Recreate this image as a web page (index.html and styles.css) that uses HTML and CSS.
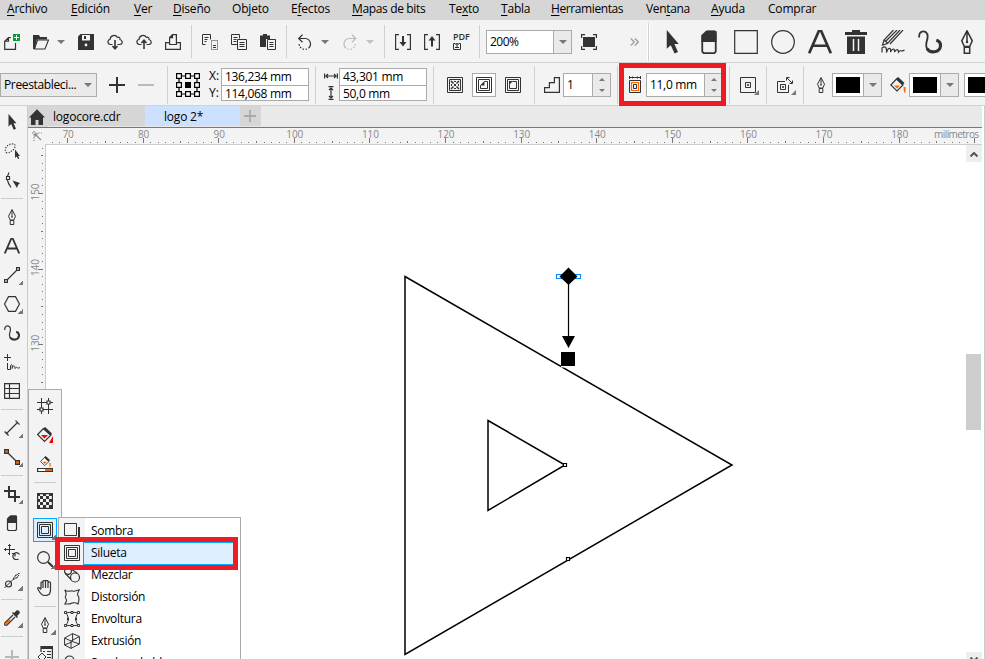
FILE: index.html
```html
<!DOCTYPE html>
<html lang="es">
<head>
<meta charset="utf-8">
<title>logo 2*</title>
<link rel="stylesheet" href="styles.css">
</head>
<body>
<svg class="defs">
  <symbol id="pointer" viewBox="0 0 16 16"><path class="f" d="M4.500 0v12.500l2.700-2.400 2.500 5.600 2.300-1-2.400-5.400H12.500z"/></symbol>
  <symbol id="eraser" viewBox="0 0 16 16"><path class="f" d="M3 8V3.500L6 .5h6.500L13 1v7z"/><path d="M3.500 7v7.500l1 1h7l1-1V2l-1-1H7L3.500 4z"/></symbol>
  <symbol id="letter-tool" viewBox="0 0 16 16"><path d="M.8 15.500 7.300.5h1.400l6.500 15M3 10.500h10" stroke-width="1.800"/></symbol>
  <symbol id="curve" viewBox="0 0 16 16"><path d="M.8 5C.3 1 3.500.2 5.300 1.500 9 4.500 3 9.500 6.500 13" stroke-width="1.200"/><path d="M6 12.300c2 3.500 8.700 3 9-1.800.1-2-1-3.200-2.800-3.700" stroke-width="2.100"/></symbol>
  <symbol id="pen" viewBox="0 0 16 16"><path d="M8 .5 4.500 7.200 6.200 11h3.600l1.700-3.800zM8 1v7M6.200 11.500v4h3.600v-4z" stroke-width="1"/><circle class="f" cx="8" cy="8" r=".8"/></symbol>
  <symbol id="contour" viewBox="0 0 16 16"><path stroke-width="1" d="M.5.5h15v15H.5zM2.500 2.500h11v11h-11zM4.500 4.500h7v7h-7z"/></symbol>
  <symbol id="bucket" viewBox="0 0 16 16"><path d="M6.500 2 .8 8l6.200 6 6-6z"/><path d="m7 1 6.500 6" stroke-width="3"/><path class="accent" d="M4 8.500h6l-3 3zM13.500 10h2v5.500h-1.500z"/></symbol>
  <symbol id="cloud" viewBox="0 0 16 16"><path d="M5.500 10.500H3.300C.2 10 .2 6 3 5.500 3.300 1 8.500.2 10.300 3.300c2-.5 3 .7 2.700 2.200 3 .8 3 4.700-.3 5h-2.200"/></symbol>
  <symbol id="page-lines" viewBox="0 0 16 16"><path stroke-width="1" d="M6.500 10.500h-6v-10h8v4M6.500 5.500h9v10h-9zM2.500 3.500h4M2.500 5.500h3M2.500 7.500h3M8.500 8.500h5M8.500 10.500h5M8.500 12.500h5"/></symbol>
  <symbol id="caret" viewBox="0 0 8 4"><path class="cf" d="M0 0h8L4 4z"/></symbol>
</svg>
<div class="app">
  <nav class="menubar">
    <span class="w63"><u>A</u>rchivo</span><span class="w63"><u>E</u>dición</span><span class="w39"><u>V</u>er</span><span class="w59"><u>D</u>iseño</span><span class="w59">Ob<u>j</u>eto</span><span class="w61">E<u>f</u>ectos</span><span class="w97"><u>M</u>apas de bits</span><span class="w52">Te<u>x</u>to</span><span class="w50"><u>T</u>abla</span><span class="w95"><u>H</u>erramientas</span><span class="w65">Ven<u>t</u>ana</span><span class="w57"><u>A</u>yuda</span><span>Comprar</span>
  </nav>

  <div class="bar standard">
    <svg class="ic" viewBox="0 0 16 16"><path d="M7 3.500H4.500L.7 7.200v8.200h10.800V9M4.500 3.500v3.700H.7"/><path fill="#0a9a3c" stroke="none" d="M9 0h7v7H9z"/><path stroke="#fff" stroke-width="1" d="M12.500 1v5M10 3.500h5"/></svg>
    <svg class="ic tight" viewBox="0 0 16 16"><path class="f" d="M0 1h6l1 2h7v2.500H4L1.500 15H0z"/><path d="M4.500 6h11L12 15H1.500z" stroke-width="1.100"/></svg>
    <svg class="caret"><use href="#caret"/></svg>
    <svg class="ic" viewBox="0 0 16 16"><path class="f" d="M2.500 0H16v16H0V2.500z"/><path fill="#f3f3f3" stroke="none" d="M4 1h8v5.500H4z"/><path class="f" d="M6 2h2v3H6z"/><circle cx="8" cy="11" r="1.400" fill="#f3f3f3" stroke="none"/></svg>
    <svg class="ic" viewBox="0 0 16 16"><use href="#cloud"/><path d="M8 6v9M5.500 12 8 14.700l2.500-2.700" stroke-width="1.600"/></svg>
    <svg class="ic" viewBox="0 0 16 16"><use href="#cloud"/><path d="M8 15V6M5.500 9 8 6.300 10.500 9" stroke-width="1.600"/></svg>
    <svg class="ic" viewBox="0 0 16 16"><path d="M4.600 10.500V3.500l2.900-2.900h3.900v9.900zM4 8.600H.6v6.800h14.800V8.600H12M7.500.6v3h-3"/></svg>
    <i class="sep"></i>
    <svg class="ic" viewBox="0 0 16 16"><path stroke-width="1" d="M3.500 10.500h-3v-10h8v5M2.500 3.500h4M2.500 5.500h3M2.500 7.500h2"/><path stroke-width="1" d="M9.500 6.500h6v9h-6z" stroke-dasharray="1 1"/><path stroke-width="1" d="M11 11.500h3M11 13.500h3"/></svg>
    <svg class="ic"><use href="#page-lines"/></svg>
    <svg class="ic" viewBox="0 0 16 16"><path class="f" d="M0 1.500h3V0h4v1.500h3V5H6v8H0z"/><path stroke-width="1" d="M7.500 5.500h8v10h-8zM9.500 8.500h4M9.500 10.500h4M9.500 12.500h4"/></svg>
    <i class="sep"></i>
    <svg class="ic tight" viewBox="0 0 16 16"><path d="M2 4.500h6.500a5.500 5.500 0 0 1 3 9.700M5.500.8 1.700 4.500l3.800 3.700"/><path d="M10 15a6 6 0 0 1-8-6" stroke-dasharray="1.500 1.500"/></svg>
    <svg class="caret"><use href="#caret"/></svg>
    <svg class="ic tight dim" viewBox="0 0 16 16"><path d="M13.500 4.500H7a5.500 5.500 0 0 0-3 9.700M10 .8l3.800 3.700L10 8.200"/><path d="M5.500 15a6 6 0 0 0 8-6" stroke-dasharray="1.500 1.500"/></svg>
    <svg class="caret dim"><use href="#caret"/></svg>
    <i class="sep"></i>
    <svg class="ic" viewBox="0 0 16 16"><path d="M4 .6H.6v14.800H4M12 .6h3.400v14.800H12"/><path d="M8 2v8" stroke-width="2"/><path class="f" d="M4.500 8h7L8 12.500z"/></svg>
    <svg class="ic" viewBox="0 0 16 16"><path d="M4 .6H.6v14.800H4M12 .6h3.400v14.800H12"/><path d="M8 4v8.500" stroke-width="2"/><path class="f" d="M4.500 6.500h7L8 2z"/></svg>
    <span class="pdf"><b>PDF</b><svg viewBox="0 0 8 8"><path stroke-width="1" d="M2.500 1.500h-2v6h7v-6h-2M4 6V1M2.500 3 4 1.300 5.500 3M2 5.500h4"/></svg></span>
    <i class="sep"></i>
    <div class="combo zoom"><span>200%</span><em><svg class="caret"><use href="#caret"/></svg></em></div>
    <svg class="ic full" viewBox="0 0 16 16"><path class="f" d="M2 3h12v10H2z"/><path d="M.6 4V.6H4M12 .6h3.400V4M15.400 12v3.400H12M4 15.400H.6V12"/></svg>
    <svg class="more" viewBox="0 0 9 8"><path d="m.8.5 3.500 3.500-3.500 3.500M4.800.5l3.500 3.500-3.500 3.500"/></svg>
    <i class="grip"></i>
    <div class="big">
      <svg><use href="#pointer"/></svg>
      <svg><use href="#eraser"/></svg>
      <svg viewBox="0 0 24 24"><path d="M.7.7h22.600v22.600H.7z"/></svg>
      <svg viewBox="0 0 24 24"><circle cx="12" cy="12" r="11.300"/></svg>
      <svg><use href="#letter-tool"/></svg>
      <svg viewBox="0 0 24 24"><path class="f" d="M1 2h7V0h8v2h7v3H1zM3 6.500h18V24H3z"/><path stroke="#f3f3f3" stroke-width="1.500" d="M9.500 9v12M14.500 9v12"/></svg>
      <svg viewBox="0 0 24 24"><path d="M12.500 0 3 10 1.500 15l5-1.500L19 0M16 0 4.500 11.500M22 0 9 14M3 10l4 3.500"/><path d="M1 22.500V18c3-2.500 5-1 4.500 4.500C7 17 10.500 17 9.500 22c2-4 4.500-4 4 0 2-3.500 4-3 4 0 2.500-3 3 .5 6-2"/></svg>
      <svg><use href="#curve"/></svg>
      <svg><use href="#pen"/></svg>
    </div>
  </div>

  <div class="bar props">
    <div class="combo preset"><span>Preestableci...</span><em><svg class="caret"><use href="#caret"/></svg></em></div>
    <svg class="ic plus" viewBox="0 0 16 16"><path stroke-width="2" d="M8 0v16M0 8h16"/></svg>
    <svg class="ic minus" viewBox="0 0 16 16"><path stroke-width="2" d="M0 8h16"/></svg>
    <i class="sep"></i>
    <svg class="anchor" viewBox="0 0 24 24"><path stroke-width="1.200" d="M3 3h18v18H3z"/><path fill="#fff" d="M.6.6h4.800v4.800H.6zM9.600.6h4.800v4.800H9.600zM18.600.6h4.800v4.800h-4.800zM.6 9.600h4.800v4.800H.6zM18.600 9.600h4.800v4.800h-4.800zM.6 18.600h4.800v4.800H.6zM9.600 18.600h4.800v4.800H9.600zM18.600 18.600h4.800v4.800h-4.800z"/><path fill="#000" stroke="none" d="M9 9h6v6H9z"/></svg>
    <div class="pair xy"><span>X:</span><span>Y:</span></div>
    <div class="fields"><span>136,234 mm</span><span>114,068 mm</span></div>
    <i class="sep s6"></i>
    <div class="pair size">
      <svg viewBox="0 0 14 14"><path d="M.6 4.500v5M13.400 4.500v5M2 7h10M4 5 2 7l2 2M10 5l2 2-2 2"/></svg>
      <svg viewBox="0 0 14 14"><path d="M4.500.6h5M4.500 13.400h5M7 2v10M5 4l2-2 2 2M5 10l2 2 2-2"/></svg>
    </div>
    <div class="fields"><span>43,301 mm</span><span>50,0 mm</span></div>
    <i class="sep s6"></i>
    <svg class="ic mode" viewBox="0 0 16 16"><path stroke-width="1" d="M.5.5h15v15H.5zM2.500 2.500h11v11h-11z"/><path d="m4 4 2.500 2.500M12 4 9.500 6.500M4 12l2.500-2.500M12 12 9.500 9.500" stroke-width="1.500"/><path class="f" d="M7 4h2v1H7zM7 11h2v1H7zM4 7h1v2H4zM11 7h1v2h-1zM7 7h2v2H7z"/></svg>
    <span class="pressed"><svg class="ic" viewBox="0 0 16 16"><path stroke-width="1" d="M.5.5h15v15H.5zM2.500 2.500h11v11h-11z"/><path stroke-width="1" d="M8.500 4.500h3v7h-7v-3"/><path class="f" d="M4 8.500 8.500 4v4.500z"/></svg></span>
    <svg class="ic out" viewBox="0 0 16 16"><path stroke-width="1" d="M.5.5h15v15H.5zM2.500 2.500h11v11h-11z"/><path stroke-width="1" d="M7.500 4.500h4v7h-7v-4"/><path class="f" d="M4 4h4L4 8z"/></svg>
    <i class="sep s14"></i>
    <svg class="ic steps" viewBox="0 0 16 16"><path d="M.6 15.400v-4.800h4.800V5.600h5V.6h5v14.800z"/></svg>
    <div class="spin count"><span>1</span><em><svg class="caret up"><use href="#caret"/></svg><svg class="caret"><use href="#caret"/></svg></em></div>
    <i class="sep s7"></i>
    <svg class="offset-icon" viewBox="0 0 12 17"><path stroke-width="1" d="M.5 0v3M11.500 0v3M0 1.500h12M3.500.500v2M8.500.500v2M.5 4.500h11v12H.5zM4.500 8.500h3v4h-3z"/><path stroke="#f60" stroke-width="1.200" d="M2.500 6.500h7v8h-7z"/></svg>
    <div class="spin offset"><span>11,0 mm</span><em><svg class="caret up"><use href="#caret"/></svg><svg class="caret"><use href="#caret"/></svg></em></div>
    <i class="sep s7"></i>
    <svg class="corner" viewBox="0 0 20 20"><path stroke-width="1" d="M.5 2.500h15v15H.5zM5.500 7.500h5v5h-5zM7.500 9.500h1v1h-1z"/><path class="cf" d="M19 15v5h-5z"/></svg>
    <i class="sep s6"></i>
    <svg class="corner" viewBox="0 0 20 20"><path stroke-width="1" d="M8 6.500H.5v11h11V10M3.500 9.500h5v5h-5zM5.500 11.500h1v1h-1zM10 3l5 5M9.500 5.500v-3h3M15.500 5.500v3h-3"/><path class="cf" d="M19 15v5h-5z"/></svg>
    <i class="sep s5"></i>
    <svg class="ic nib"><use href="#pen"/></svg>
    <div class="swatch"><span><b></b></span><em><svg class="caret"><use href="#caret"/></svg></em></div>
    <svg class="ic fill"><use href="#bucket"/></svg>
    <div class="swatch"><span><b></b></span><em><svg class="caret"><use href="#caret"/></svg></em></div>
    <div class="swatch last"><span><b></b></span></div>
  </div>

  <div class="body">
    <aside class="tools">
      <svg><use href="#pointer"/></svg>
      <svg viewBox="0 0 16 16"><path stroke-dasharray="1.200 1.400" d="M3 10C-1 7 3 1 8 1c5-.5 3 4 1 6-2 1-3 3-6 3z"/><path class="f" d="M11 6.500v8.500l1.700-1.500 1.300 2.500 1.200-.6-1-2.500H16z"/></svg>
      <svg viewBox="0 0 16 16"><path d="M5 .5c-3 5-1 11 2 15"/><path fill="#fff" d="M2.500 4.500h3v3h-3z"/><path class="f" d="m8.500 8.500 7.500 2.500-2 2-1 3z"/></svg>
      <i></i>
      <svg><use href="#pen"/></svg>
      <svg><use href="#letter-tool"/></svg>
      <svg class="more-tools" viewBox="0 0 16 16"><path d="M.6 12.600h2.800v2.800H.6zM12.600.6h2.800v2.800h-2.800zM3.500 12.500l9-9"/></svg>
      <svg class="more-tools" viewBox="0 0 16 16"><path d="M4.500.6h7l4 7.400-4 7.400h-7L.5 8z"/></svg>
      <svg><use href="#curve"/></svg>
      <svg viewBox="0 0 16 16"><path stroke-width="1" d="M3.500 0v7M0 3.500h7M3.500 9v6.500h3v-4c2-2 2 0 1.500 3 1.500-4 3-3 3 0 2-3 2 1 5-1"/></svg>
      <svg viewBox="0 0 16 16"><path stroke-width="1.200" d="M.6.6h14.800v14.800H.6zM5.500.6v14.800M.6 5.500h14.800M.6 10.500h14.800"/></svg>
      <i></i>
      <svg class="more-tools" viewBox="0 0 16 16"><path d="m2 14 12-12M.6 11.500l4 4M11.500.6l4 4"/></svg>
      <svg class="more-tools" viewBox="0 0 16 16"><path d="m3 3 10 10"/><path fill="#f60" d="M.6.6h3.800v3.800H.6zM11.600 11.600h3.800v3.800h-3.800z"/></svg>
      <i></i>
      <svg class="more-tools" viewBox="0 0 16 16"><path stroke-width="2" d="M0 5h11v6M5 0v11h11M11 11v5"/></svg>
      <svg><use href="#eraser"/></svg>
      <svg viewBox="0 0 16 16"><path stroke-width="1" d="M5.500 0v11M0 5.500h11M4 2 5.500.5 7 2M2 4 .5 5.500 2 7M4 9l1.500 1.500"/><path d="M15.500 10.500a3.500 3.500 0 1 0-1 4.500M8 9.500h3v3"/></svg>
      <svg class="more-tools" viewBox="0 0 16 16"><circle cx="4.500" cy="11" r="3"/><path stroke-width="1" d="m.5 15 9-9c0-3 2-1 2-4 3 1 1-2 4-1.500M9 6c3 1 1-2 4-1 0-2 1-1 2-3"/></svg>
      <i></i>
      <svg class="more-tools" viewBox="0 0 16 16"><path d="M9 5 .8 13v2.200H3L11 7"/><path class="f" d="m8 3 5 5 1-1-1-1 2.500-2.500c1-2-1-4-3-3L10 3 9 2z"/><path stroke="#f60" stroke-width="2" d="m2 14 4-4"/></svg>
      <i></i>
      <svg class="faded" viewBox="0 0 16 16"><path stroke-width="2" d="M8 1v14M1 8h14"/></svg>
    </aside>

    <main class="workspace">
      <header class="tabs">
        <svg class="home" viewBox="0 0 16 16"><path class="f" d="M8 .3 0 8.500h2V16h4.500v-5h3v5H14V8.500h2z"/></svg>
        <span class="tab">logocore.cdr</span>
        <span class="tab active">logo 2*</span>
        <span class="tab add"><svg viewBox="0 0 12 12"><path stroke-width="1.800" d="M6 0v12M0 6h12"/></svg></span>
      </header>
      <div class="stage">
        <div class="origin"><svg viewBox="0 0 10 10"><path d="M3 3l6 6M3 6V3h3"/><path stroke-dasharray="1.500 1.500" d="M0 2h10M2 0v10"/></svg></div>
        <svg class="hruler" id="hruler" viewBox="45 128 937 16"></svg>
        <svg class="vruler" id="vruler" viewBox="28 145 17 514"></svg>
        <div class="canvas">
          <svg class="drawing" viewBox="46 145 919 514">
            <path d="M405 276.500 732 465 405 654.500zM488 420.500 565 465l-77 45.500z" fill="none" stroke="#000" stroke-width="1.500"/>
            <path d="M561 366h10v1.500h-10z" fill="#fff"/>
            <path d="M556.500 274.500h24v4h-24z" fill="#fff" stroke="#0a84ff"/>
            <path d="m568.500 267.500 9 9-9 8.500-9-8.500zM562 336h13l-6.500 12zM561 352h14v14h-14z"/>
            <path d="M568.500 276v62" stroke="#000"/>
            <path d="M563.500 463.500h3v3h-3zM566.500 557.500h3v3h-3z" fill="#fff" stroke="#000"/>
          </svg>
          <div class="scroll">
            <span class="arrow"><svg viewBox="0 0 8 5"><path d="m.5 4.500 3.500-3.500 3.500 3.500" stroke-width="2"/></svg></span>
            <span class="thumb"></span>
            <span class="arrow down"><svg viewBox="0 0 8 5"><path d="m.5.500 3.500 3.500 3.500-3.500" stroke-width="2"/></svg></span>
          </div>
        </div>
      </div>
    </main>
    <div class="edge"></div>
  </div>

  <aside class="flyout">
    <svg viewBox="0 0 16 16"><path stroke-width="1" d="M4.500 0v16M11.500 0v16M0 4.500h16M0 11.500h16"/><path fill="#fff" d="M10 3h3v3h-3zM3 10h3v3H3z"/></svg>
    <svg viewBox="0 0 16 16"><path d="M6.500 1.500.6 7.500l6.900 7 6.500-6.500z"/><path d="m7 1 7 6.500" stroke-width="3"/><path class="red" d="M4 8h7l-3.500 3.500zM16 9v7h-4z"/></svg>
    <svg viewBox="0 0 16 16"><svg width="11" height="11" x="3" y="0" viewBox="0 0 16 16"><use href="#bucket"/></svg><path fill="#fff" d="M.6 12.500h14.800v3H.6z"/><path class="accent" d="M8 13h7v2H8z"/></svg>
    <i></i>
    <svg viewBox="0 0 16 16"><path d="M.6.6h14.800v14.800H.6z"/><path class="f" d="M0 0h3v3h3V0h3v3h3V0h3v3h-3v3h3v3h-3v3h3v3h-3v-3H9v3H6v-3H3v3H0v-3h3V9H0V6h3V3H0zm3 6v3h3V6zm3 0h3V3H6zm3 0v3h3V6zM6 9v3h3V9z"/></svg>
    <span class="chosen"><svg class="more-tools"><use href="#contour" width="16" height="16"/></svg></span>
    <svg class="more-tools" viewBox="0 0 16 16"><circle cx="6.500" cy="6.500" r="5.900"/><path stroke-width="2" d="m11 11 5 5"/></svg>
    <svg viewBox="0 0 16 16"><path d="M4 9V3c0-1.500 2-1.500 2 0v5V1.500c0-1.500 2.500-1.500 2.500 0V8 1.500c0-1.500 2.500-1.500 2.500 0V8 3c0-1.500 2.500-1.500 2.500 0v7c0 3-1.500 5.500-5 5.500S3.500 14 .8 9c-.5-2 1.500-2 3.200.5"/></svg>
    <i class="wide"></i>
    <svg class="more-tools"><use href="#pen"/></svg>
    <svg viewBox="0 0 16 16"><path d="M4 6V.6h11.400v14.800H10"/><path class="f" d="M4 0h12v3H4z"/><path stroke-width="1" d="M6 5.500h2M10 5.500h4M10 8.500h4M10 11.500h4M5 7l-4 4 4 4 4-4z"/></svg>
  </aside>

  <section class="submenu">
    <div><svg viewBox="0 0 16 16"><path stroke-width="1" d="M.5.5h12v12H.5z"/><path stroke-width="2" d="M15 4v11H4"/></svg><span>Sombra</span></div>
    <div class="hot"><svg><use href="#contour"/></svg><span>Silueta</span></div>
    <div><svg viewBox="0 0 16 16"><circle cx="4" cy="4" r="3.400"/><circle cx="11" cy="10.500" r="4.500"/><path d="m6.500 1.500 7 5M1.500 6.500l5.500 6"/></svg><span>Mezclar</span></div>
    <div><svg viewBox="0 0 16 16"><path stroke-width="1.100" d="M.8.8C3 3 5 2 7 2c1-1 2 1 4 0l4.200-1.200c-1 3-2.500 4-1.200 6 1.500 1 .5 2 1 4l-1 4.200c-3-2-4-1-6-1-2 1.500-4 1-7.200 1C3 12 3 11 1.500 9c-.8-2 1.500-3 .5-5z"/></svg><span>Distorsión</span></div>
    <div><svg viewBox="0 0 16 16"><path stroke-width="1" d="M2 2c4-1 8-1 12 0-3 4-3 8 0 12-4 1-8 1-12 0 3-4 3-8 0-12z"/><path stroke-width="1" fill="#fff" d="M.5.5h2v2h-2zM13.500.5h2v2h-2zM.5 13.500h2v2h-2zM13.500 13.500h2v2h-2zM7 .5h2v2H7zM7 13.500h2v2H7zM3.500 7h1v2h-1zM11.500 7h1v2h-1z"/></svg><span>Envoltura</span></div>
    <div><svg viewBox="0 0 16 16"><path stroke-width="1" d="m.6 5 8-4.400 6.800 2.900v7.500L7 15.400.6 12zM.6 5 7 8l8.400-4.500M7 8v7.400M8.600.6v8M.6 12l8-3.400 6.800 2.400"/></svg><span>Extrusión</span></div>
    <div><svg viewBox="0 0 16 16"><circle cx="5.500" cy="5.500" r="4.500"/><path d="m8 8 7 7V8z"/></svg><span>Sombra de bloque</span></div>
  </section>
  <i class="mark mark-offset"></i>
  <i class="mark mark-menu"></i>
</div>
<script src="script.js"></script>
</body>
</html>
```
FILE: styles.css
```css
* { box-sizing: border-box; }
body { margin: 0; overflow: hidden; font: 12px/16px "Open Sans", "Noto Sans", sans-serif; color: #000; }
i, em { font-style: normal; }
svg { display: block; flex: none; fill: none; stroke: #333; stroke-width: 1.2; }
.defs { position: absolute; width: 0; height: 0; }
.f { fill: #333; stroke: none; }
.cf { fill: #777; stroke: none; }
.accent { fill: #f60; stroke: none; }
.red { fill: #f00; stroke: none; }
.app { position: relative; width: 985px; height: 659px; overflow: hidden; display: flex; flex-direction: column; background: #f3f3f3; }

.menubar { flex: none; height: 20px; padding: 1px 0 0 7px; display: flex; background: #d6d6d6; white-space: nowrap; letter-spacing: -.2px; }
.menubar span { flex: none; }
u { text-underline-offset: 2px; text-decoration-thickness: 1px; }
.w39 { width: 39px; } .w50 { width: 50px; } .w52 { width: 52px; } .w57 { width: 57px; } .w59 { width: 59px; }
.w61 { width: 61px; } .w63 { width: 63px; } .w65 { width: 65px; letter-spacing: -.35px; } .w95 { width: 95px; letter-spacing: -.4px; } .w97 { width: 97px; letter-spacing: -.35px; }
.menubar .w63:first-child { width: 64px; }

.bar { flex: none; height: 43px; display: flex; align-items: center; border-bottom: 1px solid #d2d2d2; overflow: hidden; }
.bar > * { flex: none; }
.ic { width: 16px; height: 16px; margin-right: 13px; }
.ic.tight { margin-right: 8px; }
.caret { width: 8px; height: 4px; }
.standard { padding: 1px 0 0 4px; }
.standard > .caret { margin-right: 13px; }
.dim { stroke: #bbb; }
.caret.dim { opacity: .4; stroke: none; }
.sep { width: 1px; height: 33px; background: #d0d0d0; margin: 0 10px 0 -3px; }
.pdf { width: 16px; height: 17px; margin-right: 13px; display: flex; flex-direction: column; }
.pdf b { font: 600 9px/8px "Open Sans", sans-serif; color: #333; letter-spacing: -.1px; }
.pdf svg { width: 8px; height: 8px; margin-top: 1px; }
.combo { display: flex; height: 24px; border: 1px solid #ababab; background: #fff; }
.combo span { flex: 1; padding: 3px 0 0 3px; white-space: nowrap; letter-spacing: -.5px; }
.combo em { width: 18px; display: flex; align-items: center; justify-content: center; background: #eaeaea; border-left: 1px solid #ababab; }
.zoom { width: 86px; margin: 0 9px 0 -4px; }
.ic.full { margin-right: 33px; }
.more { width: 9px; height: 8px; margin-right: 8px; stroke: #999; }
.grip { width: 3px; height: 38px; background: #d0d0d0; border: solid #fff; border-width: 0 1px; margin-right: 4px; }
.big { display: flex; }
.big svg { width: 24px; height: 24px; margin: 0 6.400px; }

.props { padding-top: 1px; }
.preset { width: 97px; background: #eaeaea; }
.preset em { border: 0; width: 16px; }
.preset span { letter-spacing: -.35px; }
.ic.plus { margin-left: 12px; }
.ic.minus { stroke: #bbb; margin-right: 16px; }
.props .sep { margin: 0 8px 0 -3px; height: 38px; }
.anchor { width: 24px; height: 24px; stroke: #000; margin-right: 9px; }
.pair { height: 33px; display: grid; grid-template-rows: 1fr 1fr; align-items: center; }
.xy { width: 12px; }
.size { width: 15px; }
.size svg { width: 14px; height: 14px; }
.fields { width: 88px; height: 33px; display: grid; grid-template-rows: 1fr 1fr; background: #fff; border: 1px solid #ababab; }
.fields span { padding-left: 3px; line-height: 16px; letter-spacing: -.3px; }
.fields span + span { border-top: 1px solid #ababab; line-height: 15px; }
.props .s6 { margin: 0 8px 0 6px; }
.ic.mode { margin: 0 9px 0 5px; }
.pressed { width: 24px; height: 24px; border: 1px solid #ababab; background: #fff; padding: 3px; margin-right: 9px; }
.pressed .ic { margin: 0; }
.ic.out { margin: 0; }
.props .s14 { margin: 0 9px 0 13px; }
.ic.steps { margin-right: 3px; }
.spin { height: 24px; display: flex; background: #fff; border: 1px solid #ababab; }
.spin span { flex: 1; padding: 3px 0 0 3px; white-space: nowrap; letter-spacing: -.3px; }
.spin em { width: 18px; background: #eaeaea; border-left: 1px solid #ababab; display: flex; flex-direction: column; align-items: center; justify-content: space-around; }
.spin .caret { width: 6px; height: 3px; }
.up { transform: rotate(180deg); }
.count { width: 48px; }
.props .s7 { margin: 0 11px 0 6px; }
.offset-icon { width: 12px; height: 17px; margin-right: 5px; }
.offset { width: 77px; }
.props .offset + .sep { margin: 0 10px 0 6px; }
.corner { width: 20px; height: 20px; }
.props .corner + .s6 { margin: 0 10px 0 6px; }
.props .s5 { margin: 0 9px 0 6px; }
.ic.nib { margin-right: 3px; }
.swatch { width: 50px; height: 24px; display: flex; border: 1px solid #ababab; background: #fff; }
.swatch span { flex: 1; padding: 3px; }
.swatch b { display: block; height: 16px; background: #000; }
.swatch em { width: 18px; display: flex; align-items: center; justify-content: center; background: #eaeaea; border-left: 1px solid #ababab; }
.ic.fill { margin: 0 3px 0 8px; }
.swatch.last { margin-left: 5px; }

.body { flex: 1; display: flex; min-height: 0; }
.tools { width: 28px; flex: none; border-right: 1px solid #ccc; padding-top: 2px; display: flex; flex-direction: column; overflow: hidden; }
.tools > svg { width: 16px; height: 16px; margin: 6px 0 7px 4px; }
.tools > i, .flyout > i { flex: none; height: 8px; margin: 0 4px 0 1px; background: linear-gradient(#ccc, #ccc) 0 3px / 100% 1px no-repeat; }
.tools > svg.faded { opacity: .3; margin-top: 8px; }
.tools > .more-tools, .flyout .more-tools { width: 23px; height: 23px; padding: 0 7px 7px 0; background: linear-gradient(135deg, transparent 50%, #777 50%) 14px 13px / 5px 5px no-repeat; }
.tools > .more-tools { margin: 6px 0 0 4px; }
.workspace { flex: 1; display: flex; flex-direction: column; min-width: 0; margin-left: -1px; }
.tabs { flex: none; height: 22px; display: flex; background: #e9e9e9; border-bottom: 1px solid #009fee; margin-left: 1px; }
.home { width: 20px; height: 21px; padding: 3px 3px 2px 1px; background: #d6d6d6; }
.tab { height: 20px; width: 97px; padding: 3px 0 0 5px; background: #d6d6d6; letter-spacing: -.2px; line-height: 15px; }
.tab.active { width: 95px; padding-left: 19px; background: #cce1ff; }
.tab.add { width: 21px; padding: 4px; }
.add svg { width: 12px; height: 12px; stroke: #aaa; }
.stage { flex: 1; display: grid; grid-template: 17px 1fr / 18px 1fr; min-height: 0; }
.origin { padding: 3px 0 0 5px; }
.origin svg { width: 10px; height: 10px; stroke: #888; }
.hruler { width: 937px; height: 16px; }
.hruler, .vruler { stroke: #777; stroke-width: 1; overflow: visible; }
.hruler text, .vruler text { font: 10px "Open Sans", sans-serif; fill: #888; stroke: none; letter-spacing: -.1px; }
.vruler { width: 17px; height: 514px; }
.canvas { background: #fff; border: solid #ccc; border-width: 1px 0 0 1px; display: flex; min-height: 0; margin-top: -1px; }
.drawing { width: 919px; height: 514px; fill: #000; stroke: none; }
.scroll { width: 17px; display: flex; flex-direction: column; }
.scroll .arrow { height: 17px; background: #eee; padding: 7px 0 0 4px; margin: 0 0 0 1px; }
.arrow svg { width: 8px; height: 5px; stroke: #555; }
.thumb { height: 76px; margin: 192px 1px 0; background: #cdcdcd; }
.scroll .arrow.down { margin-top: auto; height: 7px; padding-top: 5px; overflow: hidden; flex: none; }
.edge { width: 3px; flex: none; background: #fff; border-right: 1px solid #ccc; }

.flyout { position: absolute; left: 28px; top: 389px; width: 34px; height: 290px; padding-top: 2px; background: #f3f3f3; border: 1px solid #aaa; display: flex; flex-direction: column; }
.flyout > svg { width: 16px; height: 16px; margin: 6px 8px 7px; }
.flyout > .more-tools { margin: 6px 0 0 8px; }
.flyout > i, .flyout > i.wide { height: 8px; margin: 0 5px; }
.chosen { width: 24px; height: 24px; flex: none; margin: 2px 4px 3px; padding: 3px; border: 1px solid #0af; background: #dfeeff; }
.submenu { position: absolute; left: 58px; top: 517px; width: 183px; height: 170px; border: 1px solid #aaa; padding-top: 2px; background: linear-gradient(90deg, #f3f3f3 26px, #fff 26px); }
.submenu div { height: 22px; display: flex; align-items: center; }
.submenu svg { width: 16px; height: 16px; margin: 0 5px; }
.submenu span { flex: 1; padding: 2px 0 2px 6px; letter-spacing: -.3px; white-space: nowrap; }
.submenu .hot span { margin: 0 4px 0 -2px; padding: 2px 0 3px 7px; border: 1px solid #0af; background: #dfeeff; }
.mark { position: absolute; border: 5px solid #ee1b24; pointer-events: none; }
.mark-offset { left: 619px; top: 63px; width: 107px; height: 43px; }
.mark-menu { left: 55px; top: 537px; width: 183px; height: 33px; }
```
FILE: script.js
```js
const STEP = 7.56;

// Horizontal ruler: 70 mm sits at x = 67.5
let h = "";
for (let i = -2; i <= 121; i++) {
  const x = 67.5 + i * STEP;
  if (x > 979) break;
  const px = Math.floor(x) + 0.5;
  const major = i % 10 === 0;
  const top = major ? 138 : i % 5 === 0 ? 141 : 142;
  h += `<path d="M${px} ${top}V143"/>`;
  if (major && i <= 110) h += `<text x="${x + 0.5}" y="137.500" text-anchor="middle">${70 + i}</text>`;
}
h += '<text x="934" y="137.500" textLength="45">milímetros</text>';
document.getElementById("hruler").innerHTML = h;

// Vertical ruler: 150 mm sits at y = 193.5
let v = "";
for (let i = -6; i <= 61; i++) {
  const y = 193.5 + i * STEP;
  const py = Math.floor(y) + 0.5;
  const major = i % 10 === 0;
  v += `<path d="M${major ? 39 : i % 5 === 0 ? 42 : 43} ${py}H44"/>`;
  if (major) v += `<text transform="translate(39.5 ${y - 1.5}) rotate(-90)" text-anchor="middle">${150 - i}</text>`;
}
document.getElementById("vruler").innerHTML = v;
```
